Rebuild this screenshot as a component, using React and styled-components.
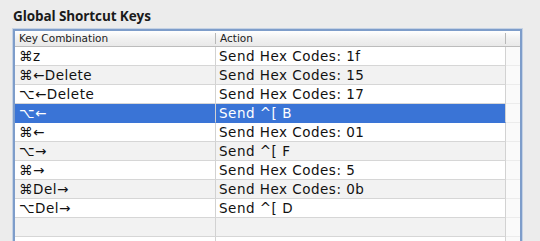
import React from "react";
import styled, { createGlobalStyle } from "styled-components";

const Global = createGlobalStyle`
  html, body { margin: 0; padding: 0; background: #ececec; overflow: hidden; }
  body { font-family: "DejaVu Sans", "Noto Sans", sans-serif; }
`;

const Page = styled.div`
  padding: 8px 0 0 13px;
  width: 540px;
  height: 241px;
  box-sizing: border-box;
  overflow: hidden;
`;

const Title = styled.h1`
  margin: 0 0 5px 0;
  font-family: "Open Sans", "DejaVu Sans", sans-serif;
  font-size: 13.5px;
  font-weight: 700;
  color: #1a1a1a;
  line-height: 16px;
  letter-spacing: -0.1px;
`;

const Frame = styled.div`
  width: 509px;
  box-sizing: border-box;
  border: 2px solid #7e9dca;
  border-bottom: none;
  box-shadow: 0 0 0 1px rgba(150, 180, 220, 0.45);
  background: #fafafa;
  height: 230px;
  overflow: hidden;
`;

const Grid = styled.div`
  display: grid;
  grid-template-columns: 201px 290px 1fr;
`;

const HeaderCell = styled.div`
  height: 15px;
  border-bottom: 1px solid #bcbcbc;
  background: linear-gradient(#ffffff, #f1f1f1 50%, #e9e9e9);
  font-size: 10.5px;
  line-height: 15px;
  color: #222;
  padding-left: ${(p) => p.$pad}px;
  position: relative;
  white-space: nowrap;
  &::after {
    content: "";
    display: ${(p) => (p.$sep ? "block" : "none")};
    position: absolute;
    right: 0;
    top: 2px;
    bottom: 2px;
    width: 1px;
    background: #b8b8b8;
  }
`;

const Cell = styled.div`
  height: 18px;
  line-height: 18px;
  font-size: 13.5px;
  letter-spacing: 0.5px;
  white-space: nowrap;
  overflow: hidden;
  padding-left: ${(p) => p.$pad}px;
  border-bottom: 1px solid ${(p) => (p.$sel ? "#3a74d6" : "#d6d6d6")};
  border-right: ${(p) => (p.$sep ? "1px solid #d2d2d2" : "none")};
  background: ${(p) => (p.$sel ? "#3a74d6" : p.$alt ? "#f2f2f2" : "#ffffff")};
  color: ${(p) => (p.$sel ? "#ffffff" : "#111")};
`;

const Filler = styled.div`
  height: 18px;
  border-bottom: 1px solid #ececec;
  background: #fafafa;
`;

const rows = [
  ["⌘z", "Send Hex Codes: 1f"],
  ["⌘←Delete", "Send Hex Codes: 15"],
  ["⌥←Delete", "Send Hex Codes: 17"],
  ["⌥←", "Send ^[ B"],
  ["⌘←", "Send Hex Codes: 01"],
  ["⌥→", "Send ^[ F"],
  ["⌘→", "Send Hex Codes: 5"],
  ["⌘Del→", "Send Hex Codes: 0b"],
  ["⌥Del→", "Send ^[ D"],
  ["", ""],
  ["", ""],
];

export default function App() {
  return (
    <>
      <Global />
      <Page>
        <Title>Global Shortcut Keys</Title>
        <Frame>
          <Grid>
            <HeaderCell $pad={4} $sep>Key Combination</HeaderCell>
            <HeaderCell $pad={4} $sep>Action</HeaderCell>
            <HeaderCell $pad={0} />
            {rows.map(([k, a], i) => {
              const sel = i === 3;
              const alt = i % 2 === 1;
              return (
                <React.Fragment key={i}>
                  <Cell $pad={4} $sep $sel={sel} $alt={alt}>{k}</Cell>
                  <Cell $pad={3} $sep $sel={sel} $alt={alt}>{a}</Cell>
                  <Filler />
                </React.Fragment>
              );
            })}
          </Grid>
        </Frame>
      </Page>
    </>
  );
}
